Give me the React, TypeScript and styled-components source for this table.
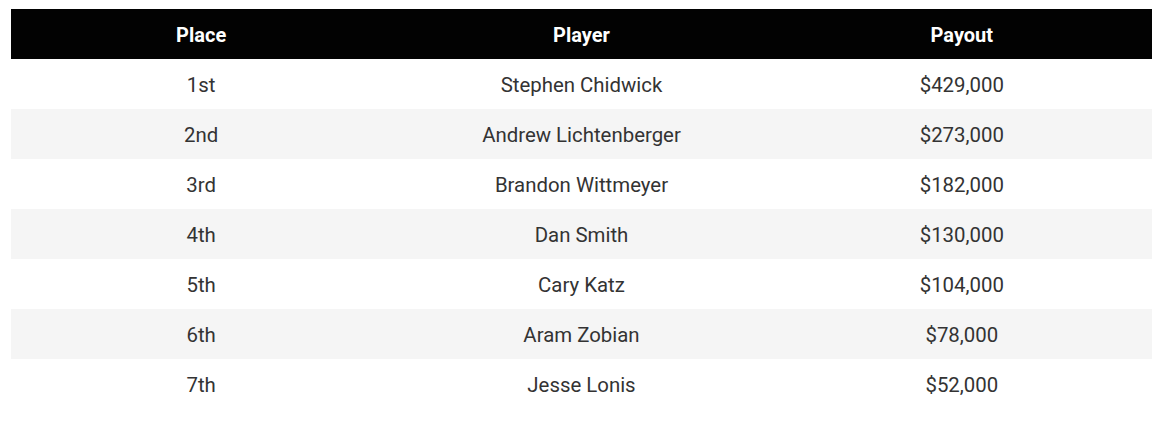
import React from 'react'
import styled, { createGlobalStyle } from 'styled-components'

const GlobalStyle = createGlobalStyle`
body {
    margin: 0;
    background: #ffffff;
    font-family: Roboto, "Liberation Sans", sans-serif;
}
`;

const results = [
    { place: '1st', player: 'Stephen Chidwick', payout: '$429,000' },
    { place: '2nd', player: 'Andrew Lichtenberger', payout: '$273,000' },
    { place: '3rd', player: 'Brandon Wittmeyer', payout: '$182,000' },
    { place: '4th', player: 'Dan Smith', payout: '$130,000' },
    { place: '5th', player: 'Cary Katz', payout: '$104,000' },
    { place: '6th', player: 'Aram Zobian', payout: '$78,000' },
    { place: '7th', player: 'Jesse Lonis', payout: '$52,000' },
];

function App() {
    return (
        <Page>
            <GlobalStyle />
            <Table>
                <thead>
                    <tr>
                        <HeadCell>Place</HeadCell>
                        <HeadCell>Player</HeadCell>
                        <HeadCell>Payout</HeadCell>
                    </tr>
                </thead>
                <tbody>
                    {results.map((r, i) => (
                        <Row key={r.place} striped={i % 2 === 1}>
                            <Cell>{r.place}</Cell>
                            <Cell>{r.player}</Cell>
                            <Cell>{r.payout}</Cell>
                        </Row>
                    ))}
                </tbody>
            </Table>
        </Page>
    )
}

export default App

const Page = styled.div`
padding: 9px 12px 0 11px;
`;

const Table = styled.table`
width: 1141px;
border-collapse: collapse;
table-layout: fixed;
`;

const HeadCell = styled.th`
width: 33.333%;
height: 50px;
padding: 1px 0 0;
box-sizing: border-box;
background: #020202;
color: #ffffff;
font-size: 20px;
font-weight: 700;
text-align: center;
`;

const Row = styled.tr<{ striped: boolean }>`
background: ${(p) => (p.striped ? '#f5f5f5' : '#ffffff')};
`;

const Cell = styled.td`
height: 50px;
padding: 1px 0 0;
box-sizing: border-box;
color: #333333;
font-size: 20.4px;
text-align: center;
`;
